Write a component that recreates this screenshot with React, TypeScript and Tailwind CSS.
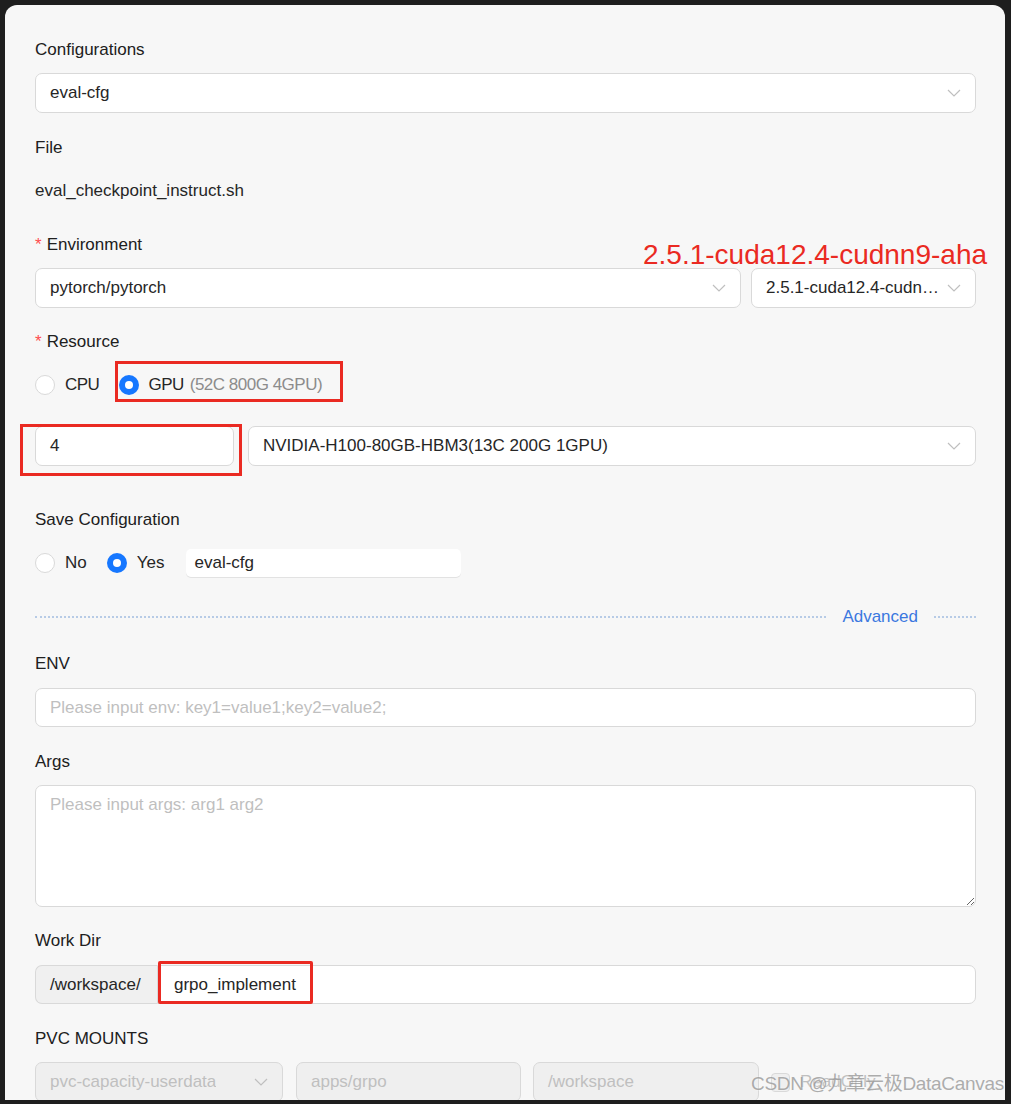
import React from "react";

const FONT = { fontFamily: '"Liberation Sans", "Noto Sans CJK SC", Arial, sans-serif' };

function Chevron() {
  return (
    <svg width="14" height="8" viewBox="0 0 14 8" fill="none" className="shrink-0">
      <path d="M1 1 L7 7 L13 1" stroke="#bfbfbf" strokeWidth="1.2" />
    </svg>
  );
}

function Select({ value, className = "", disabled = false }: { value: string; className?: string; disabled?: boolean }) {
  return (
    <div
      className={`flex h-[40px] items-center justify-between rounded-[7px] border border-[#d9d9d9] pl-[14px] pr-[14px] ${
        disabled ? "bg-[#efefef] text-[#bfbfbf]" : "bg-white text-[#262626]"
      } ${className}`}
    >
      <span className="truncate">{value}</span>
      <Chevron />
    </div>
  );
}

function Label({ children, required = false, className = "" }: { children: React.ReactNode; required?: boolean; className?: string }) {
  return (
    <div className={`h-[28px] leading-[28px] text-[#202020] ${className}`}>
      {required && <span className="mr-[5px] text-[#ff4d4f]">*</span>}
      {children}
    </div>
  );
}

function Radio({ checked }: { checked: boolean }) {
  return checked ? (
    <span className="flex h-[20px] w-[20px] shrink-0 items-center justify-center rounded-full bg-[#1677ff]">
      <span className="h-[8px] w-[8px] rounded-full bg-white" />
    </span>
  ) : (
    <span className="h-[20px] w-[20px] shrink-0 rounded-full border border-[#d9d9d9] bg-white" />
  );
}

export default function App() {
  return (
    <div className="relative h-[1104px] w-[1011px] overflow-hidden bg-[#1e1e1e] text-[17px]" style={FONT}>
      <div className="relative ml-[5px] mt-[5px] h-[1095px] w-[1000px] overflow-hidden rounded-t-[12px] bg-[#f7f7f7] pl-[30px] pr-[29px] pt-[31px]">
        {/* annotation */}
        <div className="absolute left-[638px] top-[234px] whitespace-nowrap text-[28px] leading-[32px] text-[#ea2a22]">2.5.1-cuda12.4-cudnn9-aha</div>

        <Label>Configurations</Label>
        <Select value="eval-cfg" className="mt-[9px]" />

        <Label className="mt-[21px]">File</Label>
        <div className="mt-[15px] h-[28px] leading-[28px] text-[#262626]">eval_checkpoint_instruct.sh</div>

        <Label required className="mt-[26px]">Environment</Label>
        <div className="mt-[9px] flex gap-[10px]">
          <Select value="pytorch/pytorch" className="flex-1" />
          <Select value="2.5.1-cuda12.4-cudnn9-aha" className="w-[225px]" />
        </div>

        <Label required className="mt-[20px]">Resource</Label>
        <div className="mt-[15px] flex h-[28px] items-center">
          <div className="flex items-center">
            <Radio checked={false} />
            <span className="ml-[10px] tracking-[-0.5px] text-[#262626]">CPU</span>
          </div>
          <div className="relative ml-[20px] flex items-center">
            <Radio checked />
            <span className="ml-[9px] tracking-[-0.5px] text-[#262626]">GPU</span>
            <span className="ml-[6px] tracking-[-0.5px] text-[#8c8c8c]">(52C 800G 4GPU)</span>
            <span className="pointer-events-none absolute -bottom-[4px] -left-[4px] -right-[21px] -top-[11px] border-[3px] border-[#ea2a22]" />
          </div>
        </div>

        <div className="mt-[27px] flex gap-[14px]">
          <div className="relative w-[199px]">
            <div className="flex h-[40px] items-center rounded-[7px] border border-[#d9d9d9] bg-white pl-[14px] text-[#262626]">4</div>
            <span className="pointer-events-none absolute -bottom-[10px] -left-[15px] -right-[8px] -top-[2px] border-[3px] border-[#ea2a22]" />
          </div>
          <Select value="NVIDIA-H100-80GB-HBM3(13C 200G 1GPU)" className="flex-1" />
        </div>

        <Label className="mt-[40px]">Save Configuration</Label>
        <div className="mt-[15px] flex h-[28px] items-center">
          <Radio checked={false} />
          <span className="ml-[10px] text-[#262626]">No</span>
          <span className="ml-[20px]">
            <Radio checked />
          </span>
          <span className="ml-[10px] text-[#262626]">Yes</span>
          <div className="ml-[22px] flex h-[28px] w-[275px] items-center rounded-[5px] bg-white pl-[8px] text-[#262626] shadow-[0_1px_0_#e2e2e2]">eval-cfg</div>
        </div>

        <div className="mt-[26px] flex h-[28px] items-center">
          <div className="h-0 flex-1 border-t-[2px] border-dotted border-[#b7cbe6]" />
          <span className="mx-[16px] text-[#3b78e0]">Advanced</span>
          <div className="h-0 w-[42px] border-t-[2px] border-dotted border-[#b7cbe6]" />
        </div>

        <Label className="mt-[19px]">ENV</Label>
        <div className="mt-[10px] flex h-[39px] items-center rounded-[7px] border border-[#d9d9d9] bg-white pl-[14px] text-[#bfbfbf]">
          Please input env: key1=value1;key2=value2;
        </div>

        <Label className="mt-[21px]">Args</Label>
        <textarea
          readOnly
          placeholder="Please input args: arg1 arg2"
          className="mt-[9px] block h-[122px] w-full resize-y rounded-[7px] border border-[#d9d9d9] bg-white px-[14px] py-[6px] text-[17px] text-[#262626] outline-none placeholder:text-[#bfbfbf]"
          style={FONT}
        />

        <Label className="mt-[20px]">Work Dir</Label>
        <div className="mt-[10px] flex h-[39px]">
          <div className="flex w-[122px] items-center rounded-l-[7px] border border-r-0 border-[#d9d9d9] bg-[#f0f0f0] pl-[14px] text-[#262626]">/workspace/</div>
          <div className="relative flex flex-1 items-center rounded-r-[7px] border border-[#d9d9d9] bg-white pl-[16px] text-[#262626]">
            grpo_implement
            <span className="pointer-events-none absolute -bottom-[1px] -top-[5px] left-0 w-[155px] rounded-[2px] border-[3px] border-[#ea2a22]" />
          </div>
        </div>

        <Label className="mt-[21px]">PVC MOUNTS</Label>
        <div className="mt-[9px] flex items-center">
          <Select value="pvc-capacity-userdata" disabled className="w-[248px]" />
          <div className="ml-[13px] flex h-[40px] w-[225px] items-center rounded-[7px] border border-[#d9d9d9] bg-[#efefef] pl-[14px] text-[#bfbfbf]">apps/grpo</div>
          <div className="ml-[12px] flex h-[40px] w-[226px] items-center rounded-[7px] border border-[#d9d9d9] bg-[#efefef] pl-[14px] text-[#bfbfbf]">/workspace</div>
          <span className="ml-[12px] h-[19px] w-[19px] rounded-[4px] border border-[#d9d9d9] bg-[#efefef]" />
          <span className="ml-[10px] text-[#bfbfbf]">ReadOnly</span>
        </div>
      </div>

      {/* watermark */}
      <div className="pointer-events-none absolute left-[751px] top-[1071px] whitespace-nowrap text-[19px] leading-[26px] tracking-[-0.3px] text-[#9a9a9a] opacity-80 [text-shadow:0_0_2px_#ffffff]">
        CSDN @九章云极DataCanvas
      </div>
    </div>
  );
}
